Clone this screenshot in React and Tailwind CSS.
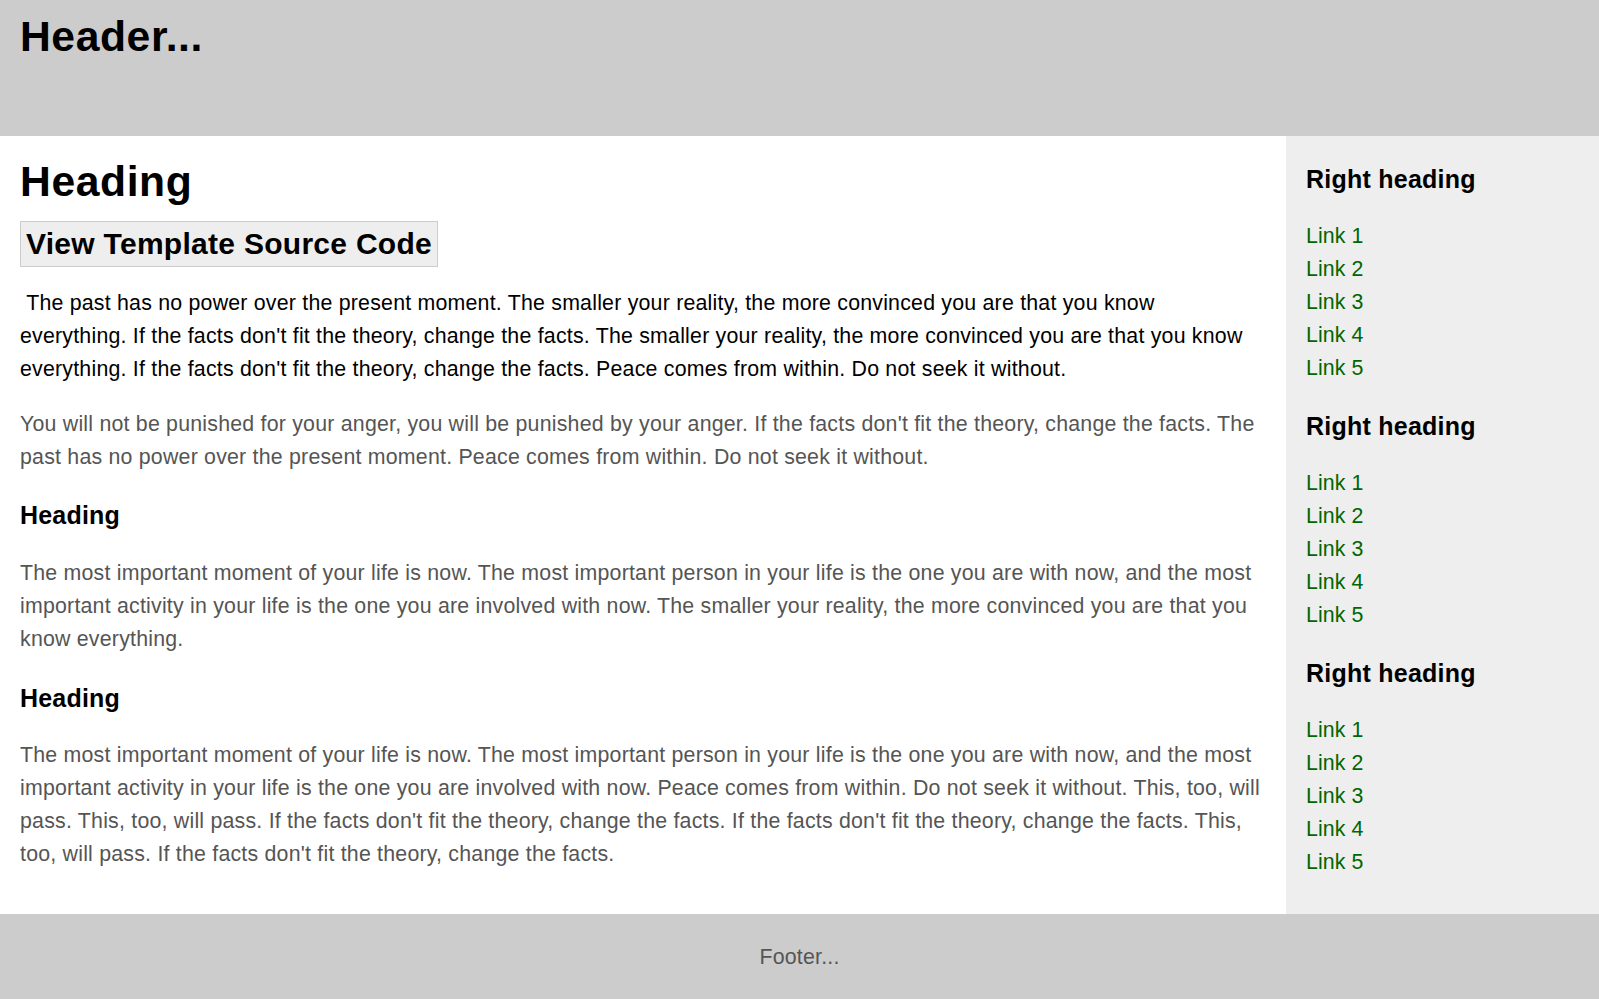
import React from "react";

const paraBase = "text-[21.33px] leading-[33px] tracking-[0.215px]";

function LinkGroup({ first }) {
  return (
    <div className={first ? "" : "mt-[26px]"}>
      <h3 className="text-[25px] leading-[30px] font-bold text-black tracking-[0.24px]">Right heading</h3>
      <ul className="mt-[26px] flex flex-col">
        {["Link 1", "Link 2", "Link 3", "Link 4", "Link 5"].map((l) => (
          <li key={l} className="text-[21.33px] leading-[33px] tracking-[0.1px]">
            <a href="#" className="text-[#006600] no-underline">{l}</a>
          </li>
        ))}
      </ul>
    </div>
  );
}

export default function App() {
  return (
    <div
      className="min-h-[999px] w-full bg-white text-black"
      style={{ fontFamily: '"Liberation Sans", Arial, sans-serif' }}
    >
      <header className="h-[136px] bg-[#cccccc] px-5 pt-[11px]">
        <h1 className="text-[42.67px] leading-[50px] font-bold tracking-[0.57px]">Header...</h1>
      </header>

      <div className="flex">
        <main className="flex-1 px-5 pt-[20px] pb-[43px]">
          <h1 className="text-[42.67px] leading-[50px] font-bold tracking-[0.58px]">Heading</h1>
          <div className="mt-[15px] flex">
            <span className="inline-block border border-[#cccccc] bg-[#eeeeee] px-[5px] pt-[1px] pb-[1px] text-[30px] leading-[42px] font-bold tracking-[0.28px]">
              View Template Source Code
            </span>
          </div>
          <p className={`${paraBase} mt-[20px] text-black`}>
            {"\u00a0"}The past has no power over the present moment. The smaller your reality, the more convinced you are that you know everything. If the facts don't fit the theory, change the facts. The smaller your reality, the more convinced you are that you know everything. If the facts don't fit the theory, change the facts. Peace comes from within. Do not seek it without.
          </p>
          <p className={`${paraBase} mt-[22px] text-[#555555]`}>
            You will not be punished for your anger, you will be punished by your anger. If the facts don't fit the theory, change the facts. The past has no power over the present moment. Peace comes from within. Do not seek it without.
          </p>
          <h3 className="mt-[26px] text-[25px] leading-[30px] font-bold tracking-[0.2px]">Heading</h3>
          <p className={`${paraBase} mt-[27px] text-[#555555]`}>
            The most important moment of your life is now. The most important person in your life is the one you are with now, and the most important activity in your life is the one you are involved with now. The smaller your reality, the more convinced you are that you know everything.
          </p>
          <h3 className="mt-[27px] text-[25px] leading-[30px] font-bold tracking-[0.2px]">Heading</h3>
          <p className={`${paraBase} mt-[26px] text-[#555555]`}>
            The most important moment of your life is now. The most important person in your life is the one you are with now, and the most important activity in your life is the one you are involved with now. Peace comes from within. Do not seek it without. This, too, will pass. This, too, will pass. If the facts don't fit the theory, change the facts. If the facts don't fit the theory, change the facts. This, too, will pass. If the facts don't fit the theory, change the facts.
          </p>
        </main>

        <aside className="w-[313px] shrink-0 bg-[#eeeeee] px-5 pt-[28px] pb-5">
          <LinkGroup first />
          <LinkGroup />
          <LinkGroup />
        </aside>
      </div>

      <footer className="h-[87px] bg-[#cccccc] pt-[27px] text-center text-[21.33px] leading-[33px] tracking-[0.215px] text-[#555555]">
        Footer...
      </footer>
    </div>
  );
}
